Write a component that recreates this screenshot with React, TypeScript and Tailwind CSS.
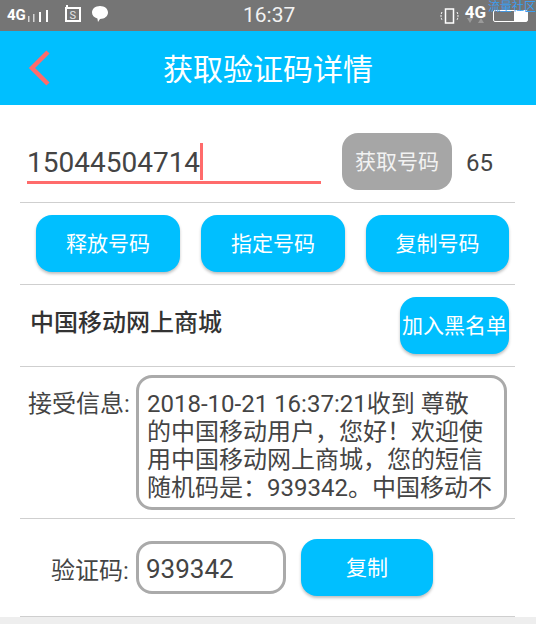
const font = { fontFamily: 'Roboto, "Noto Sans CJK SC", sans-serif' };

const Divider = ({ className = '' }: { className?: string }) => (
  <div className={`ml-5 mr-[21px] h-px bg-[#cfcfcf] ${className}`}></div>
);

const BlueButton = ({ label, className }: { label: string; className: string }) => (
  <button className={`h-[57px] rounded-[16px] bg-[#00bfff] pt-[3px] text-[21px] text-white shadow-[0_2px_3px_rgba(0,0,0,0.25)] ${className}`}>
    {label}
  </button>
);

function StatusBar() {
  return (
    <div className="relative flex h-[31px] items-center bg-[#757575] text-white">
      <span className="ml-[7px] text-[15px] font-bold leading-none">4G</span>
      {/* signal bars */}
      <svg width="24" height="14" viewBox="0 0 24 14" className="ml-[1px]" fill="#fff">
        <rect x="1" y="7" width="1.5" height="6" opacity="0.7" />
        <rect x="6" y="5" width="1.5" height="8" opacity="0.7" />
        <rect x="12" y="3" width="2" height="10" />
        <rect x="19" y="1" width="2" height="12" />
      </svg>
      <svg width="16" height="18" viewBox="0 0 16 18" className="ml-[14px] -mt-[3px]" fill="none" stroke="#fff">
        <path d="M1 3h14v13H1z M2 0v3" strokeWidth="2" />
        <text x="4.500" y="13.500" fontSize="11" fill="#e6e6e6" stroke="none">S</text>
      </svg>
      <svg width="18" height="18" viewBox="0 0 18 18" className="ml-[10px] -mt-[4px]" fill="#fff">
        <path d="M9 1c4.600 0 8 2.800 8 6.500 0 3.600-3.400 6.500-8 6.500l-2 3-.6-3.400C3 12.600 1 10.300 1 7.500 1 3.800 4.400 1 9 1z" />
      </svg>
      <span className="absolute left-[243px] top-[3px] text-[21px] leading-[25px] text-[#f2f2f2]">16:37</span>
      <div className="ml-auto mr-[8px] flex items-center">
        <svg width="20" height="18" viewBox="0 0 20 18" fill="none" stroke="#fff">
          <rect x="5.500" y="2" width="8" height="14" strokeWidth="1.500" />
          <path d="M2 5q-2 4 0 8M17 5q2 4 0 8" strokeWidth="1" strokeDasharray="2 1" />
        </svg>
        <div className="relative ml-[5px] mr-[7px] -mt-[6px]">
          <span className="text-[17px] font-bold leading-none">4G</span>
          <svg width="20" height="6" viewBox="0 0 20 6" className="absolute left-[2px] top-[17px]" fill="#9a9a9a">
            <path d="M0 0h6l-3 5zM11 5h6l-3-5z" />
          </svg>
        </div>
        <div className="flex h-[12px] w-[35px] justify-end rounded-[2px] border border-white">
          <div className="h-full w-[13px] bg-white"></div>
        </div>
      </div>
      <span className="absolute right-0 top-0 text-[12px] leading-[14px] text-[#3b9df0]">流量社区</span>
    </div>
  );
}

export default function App() {
  return (
    <div className="h-[624px] w-[536px] overflow-hidden bg-white text-[#333]" style={font}>
      <StatusBar />

      <div className="relative flex h-[74px] items-center justify-center bg-[#00bfff]">
        <svg width="26" height="38" viewBox="0 0 26 38" className="absolute left-[27px] top-[18px]" fill="none" stroke="#ff6b6b" strokeWidth="4.500">
          <path d="M21 3L5 19l16 16" />
        </svg>
        <span className="pt-0.5 text-[30px] text-white">获取验证码详情</span>
      </div>

      <div className="flex h-[97px] items-start pl-[27px]">
        <div className="mt-[36px] flex h-[43px] w-[294px] items-center border-b-[3px] border-[#ff6b6b]">
          <span className="pt-[3px] text-[28px] leading-none text-[#444]">15044504714</span>
          <span className="h-[37px] w-[3px] bg-[#ff6b6b]"></span>
        </div>
        <button className="ml-[21px] mt-[28px] h-[57px] w-[110px] rounded-[16px] bg-[#a6a6a6] pt-[3px] text-[21px] text-[#f2f2f2]">获取号码</button>
        <span className="ml-[14px] mt-[46px] text-[24px] leading-none text-[#444]">65</span>
      </div>
      <Divider />

      <div className="flex h-[81px] items-center pl-9">
        <BlueButton label="释放号码" className="w-[144px]" />
        <BlueButton label="指定号码" className="ml-[21px] w-[144px]" />
        <BlueButton label="复制号码" className="ml-[21px] w-[143px]" />
      </div>
      <Divider />

      <div className="flex h-[81px] items-center pl-[30px]">
        <span className="-mt-[5px] text-[24px] font-medium leading-none">中国移动网上商城</span>
        <BlueButton label="加入黑名单" className="ml-auto mr-[27px] w-[109px]" />
      </div>
      <Divider />

      <div className="flex h-[151px] items-start pl-7">
        <span className="mt-[25px] w-[108px] text-[24px] leading-none text-[#444]">接受信息:</span>
        <div className="mt-2 h-[135px] w-[371px] overflow-hidden whitespace-nowrap rounded-[16px] border-[3px] border-[#aaa] pl-2 pt-3 text-[24px] leading-[28px] text-[#444]">
          2018-10-21 16:37:21收到 尊敬<br />
          的中国移动用户，您好！欢迎使<br />
          用中国移动网上商城，您的短信<br />
          随机码是：939342。中国移动不
        </div>
      </div>
      <Divider />

      <div className="flex h-[97px] items-start">
        <span className="ml-[51px] mt-[40px] w-[85px] text-[24px] leading-none text-[#444]">验证码:</span>
        <div className="mt-[22px] flex h-[53px] w-[150px] items-center rounded-[16px] border-[3px] border-[#aaa] pl-[7px] pt-0.5 text-[26px] leading-none text-[#444]">939342</div>
        <BlueButton label="复制" className="ml-[15px] mt-5 w-[132px]" />
      </div>
      <Divider className="h-0.5" />
      <div className="h-2 bg-[#eeeeee]"></div>
    </div>
  );
}
